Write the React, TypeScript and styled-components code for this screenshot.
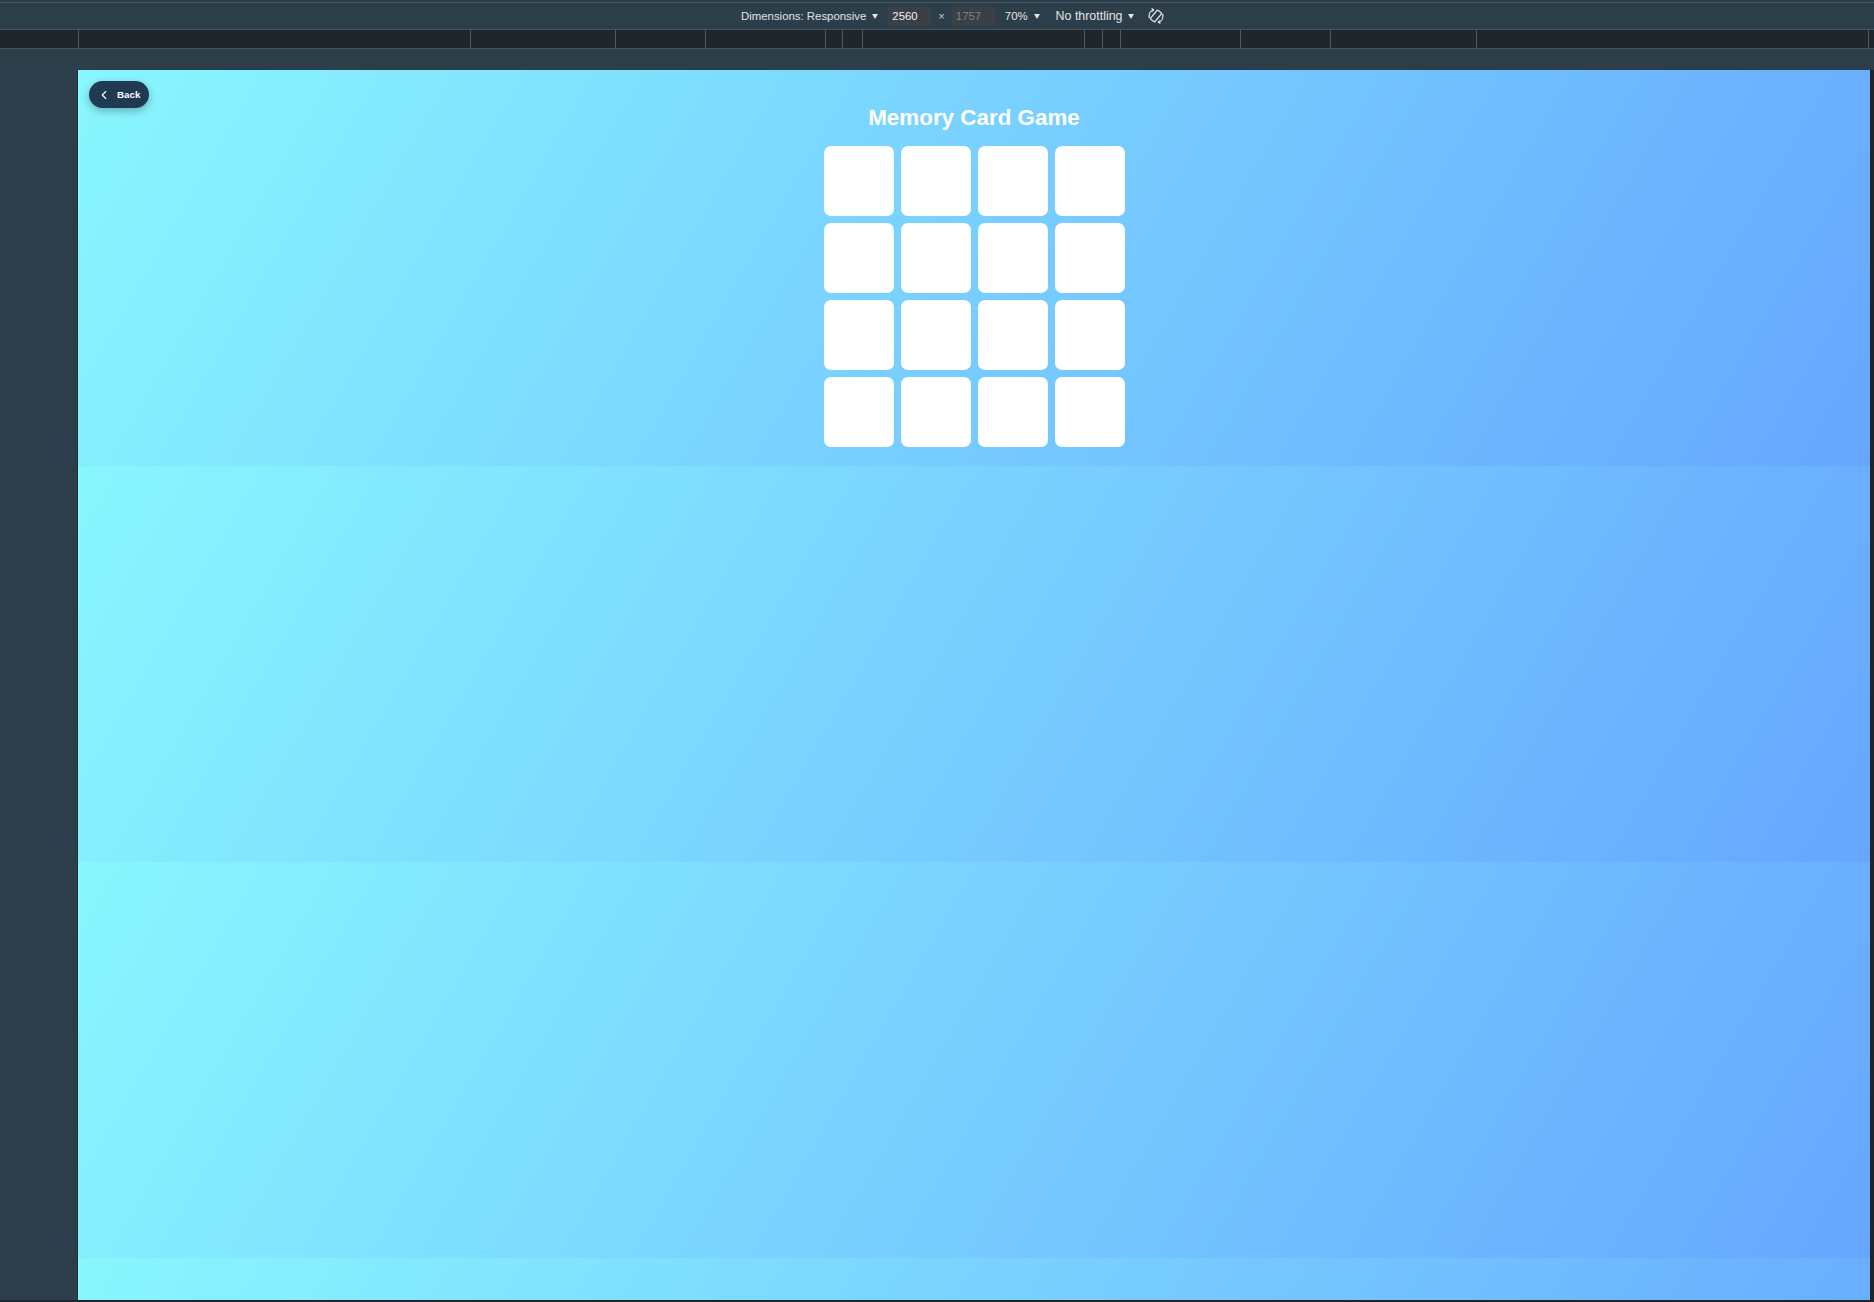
import React from "react";
import styled, { createGlobalStyle } from "styled-components";

const GlobalStyle = createGlobalStyle`
  html, body {
    margin: 0;
    padding: 0;
    background: #2c3e4a;
  }
  body {
    width: 1874px;
    height: 1302px;
    overflow: hidden;
    font-family: "Liberation Sans", Arial, sans-serif;
  }
  * { box-sizing: border-box; }
`;

const Shell = styled.div`
  display: flex;
  flex-direction: column;
  width: 1874px;
  height: 1302px;
  background: #2c3e4a;
`;

const DeviceToolbar = styled.div`
  margin-top: 2px;
  height: 28px;
  border-top: 1px solid #465661;
  border-bottom: 1px solid #465661;
  display: flex;
  align-items: center;
  padding-left: 741px;
  color: #e3e3e3;
  font-family: "Liberation Sans", Arial, sans-serif;
  font-size: 11.4px;
`;

const ToolItem = styled.div<{ $ml?: number; $size?: number }>`
  display: flex;
  align-items: center;
  margin-left: ${(p) => p.$ml ?? 0}px;
  font-size: ${(p) => p.$size ?? 11.4}px;
  white-space: nowrap;
`;

const Caret = styled.span`
  display: inline-block;
  width: 0;
  height: 0;
  margin-left: 6px;
  border-left: 3.5px solid transparent;
  border-right: 3.5px solid transparent;
  border-top: 5px solid #e3e3e3;
`;

const SizeBox = styled.div<{ $muted?: boolean }>`
  width: 43px;
  height: 18px;
  display: flex;
  align-items: center;
  padding-left: 4px;
  background: #3a4046;
  color: ${(p) => (p.$muted ? "#7d8288" : "#f2f2f2")};
  border-radius: 2px;
`;

const Times = styled.span`
  margin: 0 7px;
  color: #c8c8c8;
  font-size: 11px;
`;

const Ruler = styled.div`
  height: 19px;
  display: flex;
  background: #1f272d;
  border-bottom: 1px solid #465661;
`;

const RulerSegment = styled.div<{ $w: number }>`
  width: ${(p) => p.$w}px;
  flex: none;
  border-right: 1px solid #4c5b66;
`;

const Spacer = styled.div`
  height: 21px;
  flex: none;
`;

const Stage = styled.div`
  display: flex;
  height: 1230px;
  flex: none;
`;

const Gutter = styled.div`
  width: 78px;
  flex: none;
  background: #2c3e4a;
  border-right: 1px solid #233039;
`;

const Viewport = styled.div`
  position: relative;
  width: 1792px;
  height: 1230px;
  flex: none;
  background-image: linear-gradient(120deg, #89f7fe 0%, #66a6ff 100%);
  background-size: 1792px 396px;
  background-repeat: repeat-y;
  overflow: hidden;
`;

const EdgeStrip = styled.div`
  width: 4px;
  flex: none;
  background: #1e262c;
`;

const BottomStrip = styled.div`
  height: 2px;
  flex: none;
  background: #1e262c;
`;

const BackButton = styled.button`
  position: absolute;
  left: 11px;
  top: 11px;
  height: 27px;
  display: flex;
  align-items: center;
  gap: 6px;
  padding: 0 9px 0 8px;
  border: none;
  border-radius: 14px;
  background: #1f3a52;
  color: #ffffff;
  font-family: "Liberation Sans", Arial, sans-serif;
  font-weight: 700;
  font-size: 9.8px;
  box-shadow: 0 3px 8px rgba(0, 0, 0, 0.28);
  cursor: pointer;
`;

const Game = styled.main`
  display: flex;
  flex-direction: column;
  align-items: center;
  padding-top: 19.6px;
`;

const Title = styled.h1`
  margin: 15px 0;
  color: #ffffff;
  font-family: "Liberation Sans", Arial, sans-serif;
  font-weight: 700;
  font-size: 22.4px;
  line-height: normal;
`;

const Board = styled.div`
  display: grid;
  grid-template-columns: repeat(4, 70px);
  grid-auto-rows: 70px;
  gap: 7px;
`;

const Card = styled.div`
  background: #ffffff;
  border-radius: 7px;
`;

const ticks = [79, 471, 616, 706, 826, 843, 863, 1085, 1103, 1121, 1241, 1331, 1477, 1869];

function RotateIcon() {
  return (
    <svg width="18" height="18" viewBox="0 0 18 18" fill="none" stroke="#e3e3e3" strokeWidth="1.3" strokeLinecap="round">
      <rect x="6.2" y="3.2" width="5.6" height="11.6" rx="1" transform="rotate(40 9 9)" />
      <path d="M2.2 10.5 A7 7 0 0 1 6.5 2.6" />
      <path d="M6.5 2.6 L5 1.8 M6.5 2.6 L5.6 4" />
      <path d="M15.8 7.5 A7 7 0 0 1 11.5 15.4" />
      <path d="M11.5 15.4 L13 16.2 M11.5 15.4 L12.4 14" />
    </svg>
  );
}

function ChevronLeft() {
  return (
    <svg width="14" height="14" viewBox="0 0 24 24" fill="none" stroke="#ffffff" strokeWidth="2" strokeLinecap="round" strokeLinejoin="round">
      <path d="m15 18-6-6 6-6" />
    </svg>
  );
}

export default function App() {
  const segments = ticks.map((t, i) => t - (i === 0 ? 0 : ticks[i - 1]));
  const cards = Array.from({ length: 16 }, (_, i) => i);
  return (
    <>
      <GlobalStyle />
      <Shell>
        <DeviceToolbar>
          <ToolItem>
            Dimensions: Responsive
            <Caret />
          </ToolItem>
          <ToolItem $ml={10}>
            <SizeBox>2560</SizeBox>
            <Times>×</Times>
            <SizeBox $muted>1757</SizeBox>
          </ToolItem>
          <ToolItem $ml={10}>
            70%
            <Caret />
          </ToolItem>
          <ToolItem $ml={16} $size={12.4}>
            No throttling
            <Caret />
          </ToolItem>
          <ToolItem $ml={13}>
            <RotateIcon />
          </ToolItem>
        </DeviceToolbar>
        <Ruler>
          {segments.map((w, i) => (
            <RulerSegment key={i} $w={w} />
          ))}
        </Ruler>
        <Spacer />
        <Stage>
          <Gutter />
          <Viewport>
            <BackButton>
              <ChevronLeft />
              Back
            </BackButton>
            <Game>
              <Title>Memory Card Game</Title>
              <Board>
                {cards.map((c) => (
                  <Card key={c} />
                ))}
              </Board>
            </Game>
          </Viewport>
          <EdgeStrip />
        </Stage>
        <BottomStrip />
      </Shell>
    </>
  );
}
